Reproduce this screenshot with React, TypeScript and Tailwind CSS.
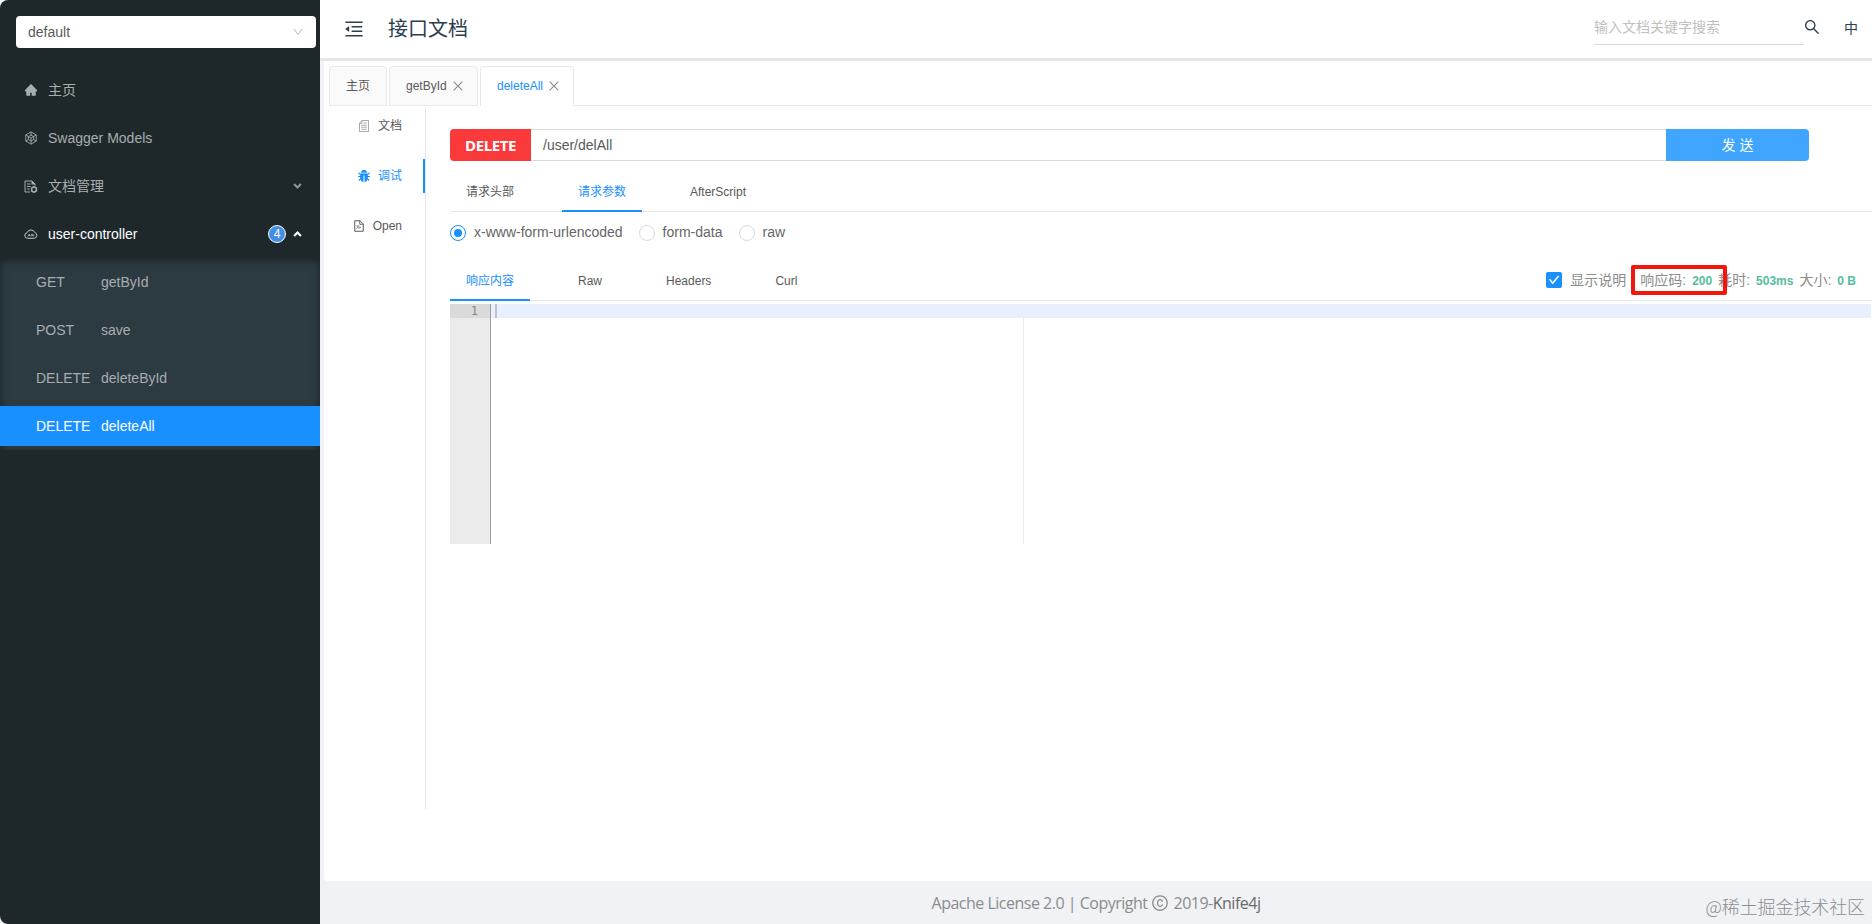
import React from "react";
import {
  AiFillBug,
  AiFillHome,
  AiOutlineCheck,
  AiOutlineClose,
  AiOutlineCopyright,
  AiOutlineDown,
  AiOutlineMenuFold,
  AiOutlineSearch,
} from "react-icons/ai";
import clsx from "clsx";

interface IconProps {
  className?: string;
}

const ModelIcon = ({ className }: IconProps) => (
  <svg viewBox="0 0 24 24" fill="none" stroke="currentColor" strokeWidth="1.5" className={className}>
    <path d="M12 1.5 21 6.8v10.4L12 22.500 3 17.200V6.800z" />
    <path d="M12 1.500v6M3 6.800l5 3M21 6.800l-5 3M12 22.500v-6M3 17.200l4.500-2.500M21 17.200l-4.500-2.500" />
    <path d="m12 7 4.500 2.600v5L12 17.200l-4.500-2.600v-5zM7.500 9.600l4.500 2.600 4.500-2.600M12 12.200v5" />
  </svg>
);

const DocManageIcon = ({ className }: IconProps) => (
  <svg viewBox="0 0 28 26" fill="none" stroke="currentColor" strokeWidth="2" className={className}>
    <path d="M12 24H2V2h14l6 6v3" />
    <path d="M6 8h7M6 13h7M6 18h5" />
    <path d="M15 1v8h8z" fill="currentColor" stroke="none" />
    <circle cx="20" cy="19" r="4.800" strokeWidth="3" />
    <path d="M20 11.500v3M20 23.500V26M13.500 15.500l2 1.200M24.500 21.300l2 1.200M13.500 22.500l2-1.200M24.500 16.700l2-1.200" />
  </svg>
);

const CloudIcon = ({ className }: IconProps) => (
  <svg viewBox="0 0 28 20" fill="none" stroke="currentColor" strokeWidth="2" className={className}>
    <path d="M7 18.500a5.500 5.500 0 0 1-1-10.900A8.300 8.300 0 0 1 21.500 7 6 6 0 0 1 21 18.500z" />
    <path d="m8 14.500 2.500-4.500 2.500 4.500M9 13h3M15.500 14.500V10l3 4.500V10" strokeWidth="1.500" />
  </svg>
);

const OpenIcon = ({ className }: IconProps) => (
  <svg viewBox="0 0 20 24" fill="none" stroke="currentColor" strokeWidth="2" className={className}>
    <path d="M1.500 1.500H12l6.500 6.500v14.500h-17z" />
    <path d="M11.500 1.500V8.500h7M5 12h6M5 17c2-5 4 2 9-3" strokeWidth="1.800" />
  </svg>
);

const DocIcon = ({ className }: IconProps) => (
  <svg viewBox="0 0 20 24" fill="none" stroke="currentColor" strokeWidth="1.500" className={className}>
    <path d="M6 1h13v22H1V6.500zM6 1v5.500H1" />
    <path d="M9 6h6.500M4.500 10.500h11M4.500 14.500h11M4.500 18.500h11" />
  </svg>
);

const Chevron = ({ className }: IconProps) => (
  <svg viewBox="0 0 10 7" fill="none" stroke="currentColor" strokeWidth="2.500" className={className}>
    <path d="m1 1.200 4 4 4-4" />
  </svg>
);

const apis = [
  { method: "GET", name: "getById" },
  { method: "POST", name: "save" },
  { method: "DELETE", name: "deleteById" },
  { method: "DELETE", name: "deleteAll", active: true },
];

const Sidebar = () => (
  <aside className="flex h-full w-80 shrink-0 flex-col rounded-l-lg bg-[#1e282a] text-sm text-[#a8adaf]">
    <div className="mt-4 ml-4 flex h-8 w-[300px] items-center justify-between rounded bg-white pr-3 pl-3 text-[#5a5a5a]">
      <span>default</span>
      <AiOutlineDown className="size-3 text-[#bfbfbf]" />
    </div>
    <nav className="mt-[18px]">
      <div className="flex h-12 items-center pl-6">
        <AiFillHome className="mr-2.5 size-3.5" />
        主页
      </div>
      <div className="flex h-12 items-center pl-6">
        <ModelIcon className="mr-2.5 size-3.5" />
        Swagger Models
      </div>
      <div className="flex h-12 items-center pr-[18px] pl-6">
        <DocManageIcon className="mr-2.5 h-[13px] w-3.5" />
        <span className="grow">文档管理</span>
        <Chevron className="h-1.5 w-[9px] text-[#8e9395]" />
      </div>
      <div className="flex h-12 items-center pr-[18px] pl-6 text-white">
        <CloudIcon className="mr-2.5 h-2.5 w-3.5 text-[#c4c8ca]" />
        <span className="grow">user-controller</span>
        <span className="mr-[7px] flex size-[18px] items-center justify-center rounded-full border border-white bg-[#4190e6] text-xs">
          4
        </span>
        <Chevron className="h-1.5 w-[9px] rotate-180" />
      </div>
      <div className="flex flex-col gap-2 bg-[#2c3b41] py-1 shadow-[inset_0_2px_8px_rgba(0,0,0,0.45)]">
        {apis.map((api) => (
          <div
            key={api.name}
            className={clsx(
              "flex h-10 items-center pl-9",
              api.active && "bg-[#1890ff] text-white"
            )}
          >
            <span className="w-[65px]">{api.method}</span>
            <span>{api.name}</span>
          </div>
        ))}
      </div>
    </nav>
  </aside>
);

const Header = () => (
  <header className="flex h-[58px] shrink-0 items-center bg-white pl-[23px] text-[#2c3e50]">
    <AiOutlineMenuFold className="size-[22px]" />
    <h1 className="mb-px ml-[23px] text-xl leading-none">接口文档</h1>
    <div className="mb-px ml-auto flex h-[33px] w-[210px] items-center border-b border-[#d9d9d9] pb-0.5 text-sm text-[#bfbfbf]">
      输入文档关键字搜索
    </div>
    <AiOutlineSearch className="-ml-px mb-1 size-[18px]" />
    <span className="mr-3.5 mb-0.5 ml-[23px] text-sm">中</span>
  </header>
);

const PageTabs = () => (
  <div className="flex h-10 shrink-0 gap-0.5 pl-[5px] text-xs text-[#595959]">
    <div className="flex w-[58px] items-center justify-center rounded-t border border-[#e8e8e8] bg-[#fafafa]">
      主页
    </div>
    <div className="flex w-[89px] items-center rounded-t border border-[#e8e8e8] bg-[#fafafa] pl-4">
      getById
      <AiOutlineClose className="ml-1 size-3.5 text-[#8c8c8c]" />
    </div>
    <div className="flex w-[94px] items-center rounded-t border border-[#e8e8e8] border-b-white bg-white pl-4">
      <span className="text-[#1890ff]">deleteAll</span>
      <AiOutlineClose className="ml-1 size-3.5 text-[#8c8c8c]" />
    </div>
    <div className="-ml-0.5 grow border-b border-[#e8e8e8]" />
  </div>
);

const SideTabs = () => (
  <div className="mt-[3px] flex h-[700px] w-[102px] shrink-0 flex-col border-r border-[#e4e4e4] text-xs text-[#595959]">
    <div className="mb-4 flex h-[34px] items-center justify-end pr-[23px]">
      <DocIcon className="mr-[9px] h-3 w-2.5 text-[#8c8c8c]" />
      文档
    </div>
    <div className="mb-4 flex h-[34px] items-center justify-end border-r-2 border-[#1890ff] pr-[21px] text-[#1890ff]">
      <AiFillBug className="mr-[7px] size-3.5" />
      调试
    </div>
    <div className="flex h-[34px] items-center justify-end pr-[23px]">
      <OpenIcon className="mr-[9px] h-3 w-2.5" />
      Open
    </div>
  </div>
);

const UrlBar = () => (
  <div className="mr-[63px] flex h-8">
    <div className="flex w-[81px] items-center justify-center rounded-l bg-[#fa3a3a] font-['Open_Sans'] text-[15px] font-bold tracking-[-0.4px] text-white">
      DELETE
    </div>
    <div className="flex grow items-center border-y border-[#d9d9d9] pl-3 text-sm text-[#595959]">
      /user/delAll
    </div>
    <div className="flex w-[143px] items-center justify-center gap-1 rounded-r bg-[#40a5ff] text-sm text-white">
      <span>发</span>
      <span>送</span>
    </div>
  </div>
);

const Radio = ({ label, checked }: { label: string; checked?: boolean }) => (
  <div className="flex items-center">
    <span
      className={clsx(
        "flex size-4 items-center justify-center rounded-full border",
        checked ? "border-[#1890ff]" : "border-[#d9d9d9]"
      )}
    >
      {checked && <span className="size-2 rounded-full bg-[#1890ff]" />}
    </span>
    <span className="mb-0.5 ml-2">{label}</span>
  </div>
);

const tabStyle = "flex items-center px-4 pt-0.5 border-b-2";
const activeTab = "border-[#1890ff] text-[#1890ff]";

const Stat = ({ label, value }: { label: string; value: string }) => (
  <span className="flex items-center">
    {label}:<b className="mt-0.5 ml-1.5 text-xs text-[#55bd9b]">{value}</b>
  </span>
);

const ResponseStats = () => (
  <div className="mr-4 mb-0.5 ml-auto flex items-center text-sm text-[#8c8c8c]">
    <span className="mr-2 flex size-4 items-center justify-center rounded-xs bg-[#1890ff]">
      <AiOutlineCheck className="size-3 stroke-[60] text-white" />
    </span>
    显示说明
    <div className="relative ml-3.5">
      <Stat label="响应码" value="200" />
      <div className="absolute -top-[5px] -left-[9px] h-[30px] w-24 rounded-xs border-4 border-[#f5150c]" />
    </div>
    <div className="ml-1.5 flex gap-1.5">
      <Stat label="耗时" value="503ms" />
      <Stat label="大小" value="0 B" />
    </div>
  </div>
);

const Editor = () => (
  <div className="mt-[3px] mr-px flex h-60">
    <div className="w-10 bg-[#ebebeb]">
      <div className="h-3.5 bg-[#dadada] pr-3 text-right font-['DejaVu_Sans_Mono'] text-xs leading-[15px] text-[#888]">
        1
      </div>
    </div>
    <div className="flex grow flex-col border-l border-[#9c9c9c]">
      <div className="h-3.5 bg-[#e8f0fe] pl-1">
        <div className="h-full w-0.5 bg-[#bfc1d4]" />
      </div>
      <div className="w-[533px] grow border-r border-[#ebebeb]" />
    </div>
  </div>
);

const DebugPanel = () => (
  <section className="flex grow flex-col pt-[23px] pl-6">
    <UrlBar />
    <div className="mt-[11px] flex h-10 border-b border-[#e8e8e8] text-xs text-[#595959]">
      <div className={clsx(tabStyle, "-mb-px mr-8 w-20 border-transparent")}>请求头部</div>
      <div className={clsx(tabStyle, activeTab, "-mb-px mr-8 w-20")}>请求参数</div>
      <div className={clsx(tabStyle, "-mb-px border-transparent")}>AfterScript</div>
    </div>
    <div className="mt-2.5 flex h-[22px] items-center gap-4 text-sm text-[#666]">
      <Radio label="x-www-form-urlencoded" checked />
      <Radio label="form-data" />
      <Radio label="raw" />
    </div>
    <div className="mt-[17px] flex h-10 border-b border-[#e8e8e8] text-xs text-[#595959]">
      <div className={clsx(tabStyle, activeTab, "-mb-px mr-8 w-20")}>响应内容</div>
      <div className={clsx(tabStyle, "-mb-px mr-8 border-transparent")}>Raw</div>
      <div className={clsx(tabStyle, "-mb-px mr-8 border-transparent")}>Headers</div>
      <div className={clsx(tabStyle, "-mb-px border-transparent")}>Curl</div>
      <ResponseStats />
    </div>
    <Editor />
  </section>
);

const App = () => {
  return (
    <div className="relative flex h-[924px] w-full overflow-hidden bg-white font-['Liberation_Sans','Noto_Sans_CJK_SC',sans-serif]">
      <Sidebar />
      <div className="flex min-w-0 grow flex-col">
        <Header />
        <div className="flex grow flex-col border-t-[3px] border-[#e6e7e9] bg-[#f0f2f5] pl-1">
          <main className="flex h-[820px] flex-col rounded-bl bg-white pt-[5px]">
            <PageTabs />
            <div className="flex grow">
              <SideTabs />
              <DebugPanel />
            </div>
          </main>
          <footer className="flex grow items-center justify-center pr-1 font-['Open_Sans','Noto_Sans_CJK_SC',sans-serif] text-base tracking-[-0.5px] text-[#8c8c8c]">
            Apache License 2.0 | Copyright
            <AiOutlineCopyright className="mx-1 size-[18px]" />
            2019-<span className="text-[#6a6a6a]">Knife4j</span>
          </footer>
        </div>
      </div>
      <div className="absolute right-[7px] bottom-1 font-['Noto_Sans_CJK_SC',sans-serif] text-lg font-light tracking-[-0.1px] text-[#8d8e90]">
        @稀土掘金技术社区
      </div>
    </div>
  );
};

export default App;
